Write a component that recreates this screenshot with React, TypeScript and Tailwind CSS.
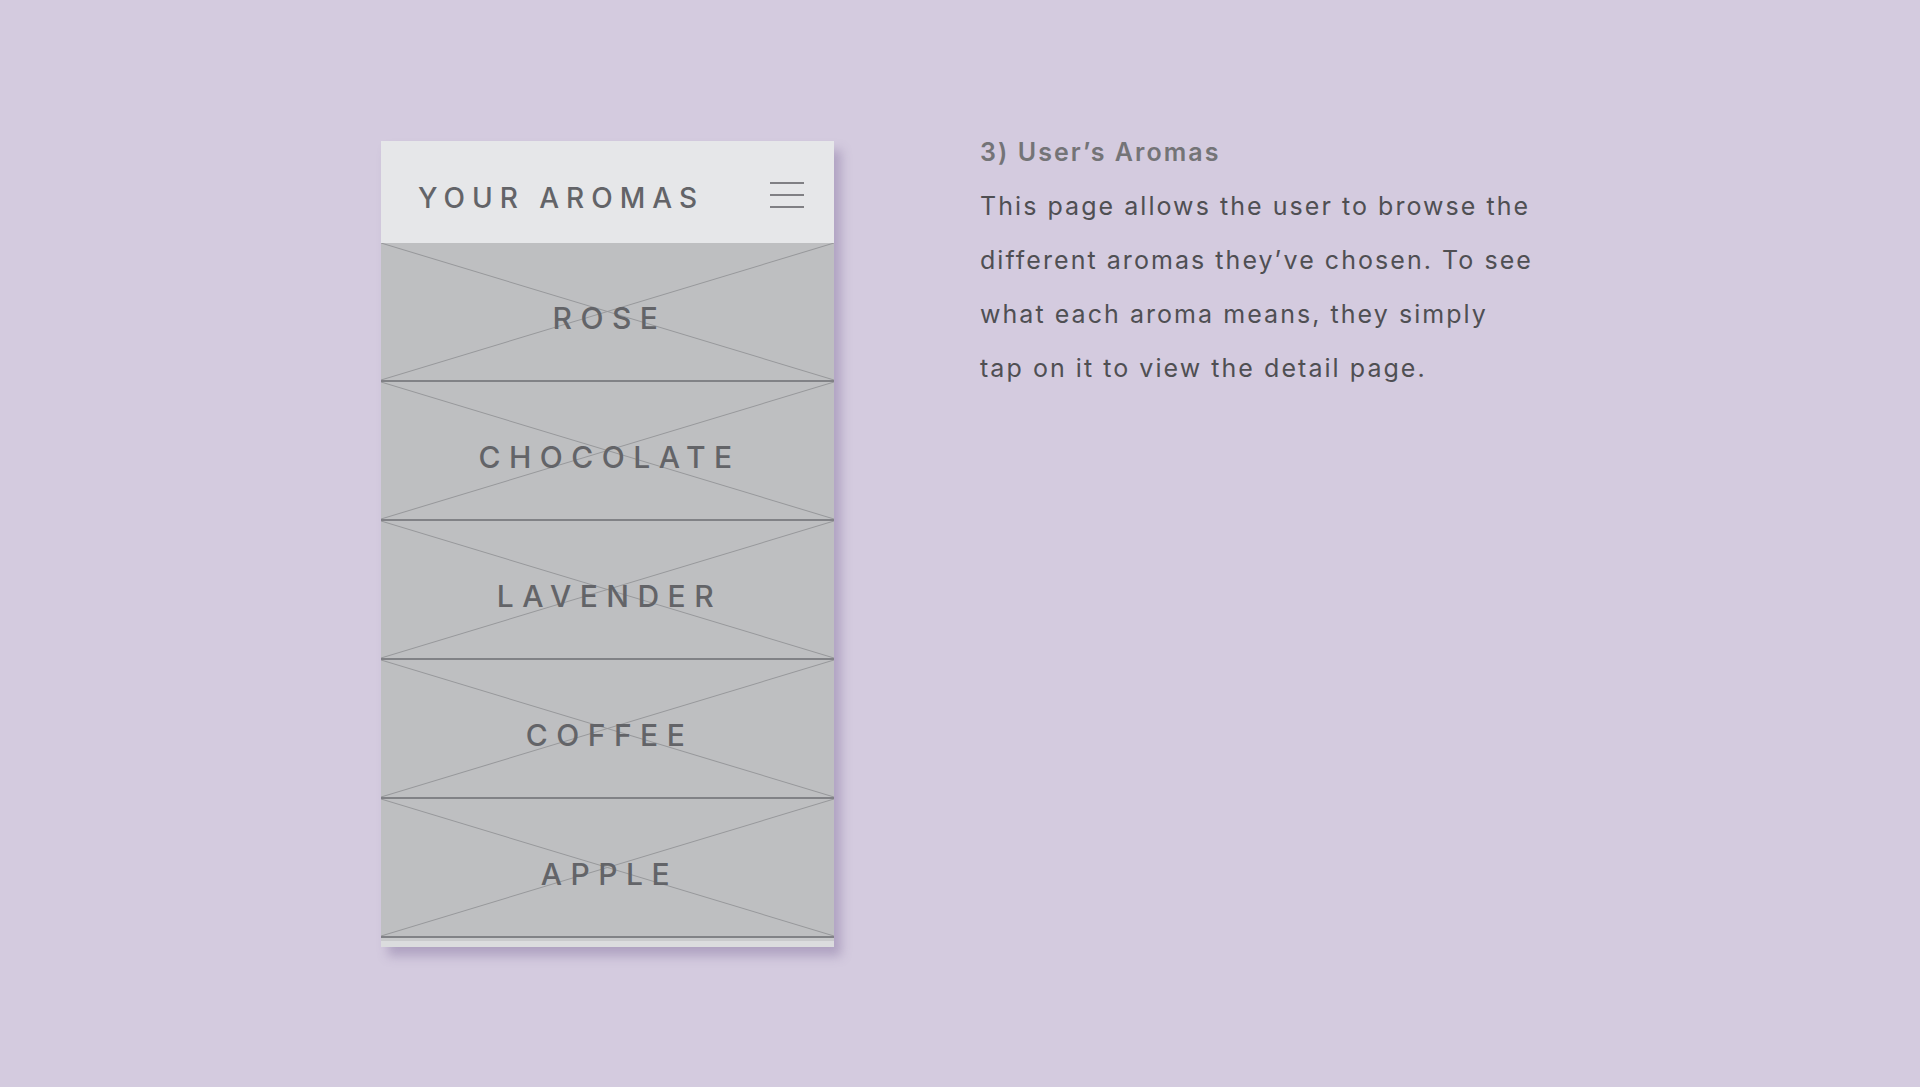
import React from "react";

const items = ["ROSE", "CHOCOLATE", "LAVENDER", "COFFEE", "APPLE"];

function Cross() {
  return (
    <svg
      className="absolute inset-0 h-full w-full"
      viewBox="0 0 100 100"
      preserveAspectRatio="none"
    >
      <line x1="0" y1="0" x2="100" y2="100" stroke="#97989b" strokeWidth="1" vectorEffect="non-scaling-stroke" />
      <line x1="100" y1="0" x2="0" y2="100" stroke="#97989b" strokeWidth="1" vectorEffect="non-scaling-stroke" />
    </svg>
  );
}

export default function App() {
  return (
    <div
      className="min-h-[1087px] w-full bg-[#d4cbdf]"
      style={{ fontFamily: "Inter, 'Noto Sans', sans-serif" }}
    >
      <div className="flex items-start pl-[381px] pt-[125px]">
        <div className="mt-[16px] flex w-[453px] flex-col shadow-[7px_9px_10px_rgba(110,90,140,0.35)]">
          <div className="flex h-[102px] items-center justify-between bg-[#e6e7e9] pl-[37px] pr-[30px]">
            <span className="pt-[12px] text-[28px] font-medium leading-none tracking-[7px] text-[#636468]">
              YOUR AROMAS
            </span>
            <div className="mt-[6px] flex w-[34px] flex-col gap-[10px]">
              <div className="h-[2px] bg-[#808084]" />
              <div className="h-[2px] bg-[#808084]" />
              <div className="h-[2px] bg-[#808084]" />
            </div>
          </div>
          {items.map((name) => (
            <div
              key={name}
              className="relative flex h-[139px] items-center justify-center border-b-2 border-[#818286] bg-[#bebfc1]"
            >
              <Cross />
              <span className="relative pl-[4px] pt-[12px] text-[30px] font-medium leading-none tracking-[8.5px] text-[#636468]">
                {name}
              </span>
            </div>
          ))}
          <div className="h-[9px] border-t-[3px] border-[#c9cacc] bg-[#dbdcde]" />
        </div>
        <div className="ml-[146px] w-[600px] text-[25px] leading-[54px] tracking-[2.05px]">
          <div className="font-semibold text-[#747477]">3) User’s Aromas</div>
          <p className="text-[#4f4f53]">
            This page allows the user to browse the
            <br />
            different aromas they’ve chosen. To see
            <br />
            what each aroma means, they simply
            <br />
            tap on it to view the detail page.
          </p>
        </div>
      </div>
    </div>
  );
}
